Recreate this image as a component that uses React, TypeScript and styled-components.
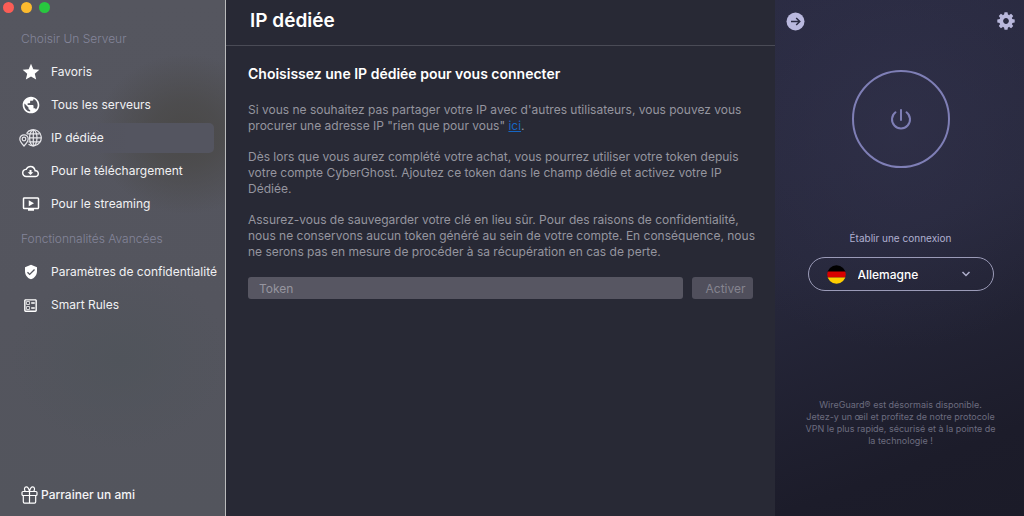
import React from "react";
import styled, { createGlobalStyle } from "styled-components";
import {
  MdStar,
  MdPublic,
  MdOutlineCloudDownload,
  MdOndemandVideo,
  MdVerifiedUser,
  MdOutlineBallot,
} from "react-icons/md";

const GlobalStyle = createGlobalStyle`
  *, *::before, *::after { box-sizing: border-box; }
  body {
    margin: 0;
    background: #282935;
    font-family: Inter, "Liberation Sans", sans-serif;
    -webkit-font-smoothing: antialiased;
  }
  button, input, select { font: inherit; color: inherit; }
  h1, h2, p, ul { margin: 0; padding: 0; }
`;

const Window = styled.div`
  display: grid;
  grid-template-columns: 226px minmax(0, 1fr) 249px;
  min-height: 100vh;
`;

const Sidebar = styled.aside`
  display: flex;
  flex-direction: column;
  border-right: 1px solid #b9babb;
  background:
    radial-gradient(ellipse 90px 80px at 186px 134px, #4a4948 0%, #4b4a4acc 40%, #54555e00 100%),
    radial-gradient(ellipse 110px 90px at 120px 360px, #50545b 0%, #54555e00 100%),
    linear-gradient(180deg, #55565f 0%, #54555e 60%, #53555d 100%);
`;

const WindowControls = styled.div`
  display: flex;
  gap: 7px;
  padding: 2px 3px;
`;

const ControlDot = styled.button<{ $color: string }>`
  width: 11px;
  height: 11px;
  padding: 0;
  border: 0;
  border-radius: 50%;
  background: ${(p) => p.$color};
`;

const NavHeading = styled.h2<{ $first?: boolean }>`
  padding-left: 21px;
  margin-top: ${(p) => (p.$first ? "16px" : "12px")};
  font-size: 12px;
  line-height: 16px;
  font-weight: 300;
  color: #84859a;
`;

const NavList = styled.ul`
  display: flex;
  flex-direction: column;
  gap: 3px;
  margin-top: 10px;
  padding-right: 11px;
  list-style: none;
`;

const NavLink = styled.a<{ $active?: boolean }>`
  display: flex;
  align-items: center;
  gap: 9px;
  height: 30px;
  padding-left: 19px;
  border-radius: 0 5px 5px 0;
  background: ${(p) => (p.$active ? "linear-gradient(90deg, #54556000, #545560 60%)" : "none")};
  color: #f1f1f3;
  font-size: 12px;
  line-height: 16px;
  white-space: nowrap;
  text-decoration: none;
`;

const IconSlot = styled.span`
  display: flex;
  flex: none;
  justify-content: center;
  width: 23px;
  color: #fff;
`;

const Referral = styled.a`
  display: flex;
  align-items: center;
  gap: 3px;
  margin-top: auto;
  padding: 0 0 12px 21px;
  color: #f4f4f6;
  font-size: 12px;
  line-height: 16px;
  font-weight: 500;
  text-decoration: none;
`;

const Main = styled.main`
  min-width: 0;
  background: #282935;
`;

const Header = styled.header`
  height: 46px;
  padding: 8px 24px 0;
  border-bottom: 1px solid #4a4b56;
`;

const Title = styled.h1`
  color: #fff;
  font-size: 19px;
  line-height: 26px;
  font-weight: 600;
`;

const Content = styled.section`
  display: flex;
  flex-direction: column;
  gap: 15px;
  padding: 18px 16px 18px 22px;
`;

const Subtitle = styled.h2`
  margin-bottom: 3px;
  color: #fff;
  font-size: 14px;
  line-height: 20px;
  font-weight: 600;
`;

const Paragraph = styled.p`
  max-width: 511px;
  color: #95959f;
  font-size: 12px;
  line-height: 16px;
`;

const TextLink = styled.a`
  color: #1666c4;
`;

const TokenForm = styled.form`
  display: flex;
  gap: 9px;
  margin: 2px 6px 0 0;
`;

const TokenInput = styled.input`
  flex: 1;
  min-width: 0;
  height: 22px;
  padding: 0 11px;
  border: 0;
  border-radius: 3px;
  background: #575662;
  font-size: 12px;
  &::placeholder { color: #96959f; opacity: 1; }
`;

const ActivateButton = styled.button`
  height: 22px;
  width: 61px;
  padding: 0 0 0 6px;
  border: 0;
  border-radius: 3px;
  background: #504f5c;
  color: #85848f;
  font-size: 12px;
`;

const ConnectPanel = styled.aside`
  display: flex;
  flex-direction: column;
  align-items: center;
  padding: 0 0 69px 2px;
  background:
    radial-gradient(circle 220px at 50% 130px, #35355080 0%, #35355000 100%),
    linear-gradient(160deg, #2a2b42 0%, #27283c 45%, #1c1c2a 85%, #1b1b28 100%);
`;

const PanelBar = styled.div`
  display: flex;
  justify-content: space-between;
  width: 100%;
  padding: 12px 9px 0;
`;

const IconButton = styled.button`
  display: flex;
  padding: 0;
  border: 0;
  background: none;
  color: #b9b8dc;
`;

const PowerButton = styled.button`
  display: flex;
  align-items: center;
  justify-content: center;
  width: 98px;
  height: 98px;
  margin-top: 39px;
  padding: 0;
  border: 2px solid #7f7fb6;
  border-radius: 50%;
  background: none;
  color: #7f7fb6;
`;

const StatusLabel = styled.label`
  margin-top: 63px;
  color: #b0b0d0;
  font-size: 10px;
  line-height: 14px;
`;

const CountryField = styled.div`
  position: relative;
  width: 186px;
  margin-top: 12px;
`;

const CountrySelect = styled.select`
  display: block;
  appearance: none;
  width: 100%;
  height: 34px;
  padding: 0 40px 0 49px;
  border: 1px solid #9b9bb8;
  border-radius: 17px;
  background: transparent;
  color: #fff;
  font-size: 12px;
  font-weight: 500;
`;

const FieldIcon = styled.span<{ $side: "left" | "right" }>`
  position: absolute;
  top: 0;
  bottom: 0;
  ${(p) => p.$side}: 19px;
  display: flex;
  align-items: center;
  pointer-events: none;
`;

const Notice = styled.p`
  width: 194px;
  margin-top: auto;
  padding-top: 24px;
  color: #6c6c7f;
  font-size: 9px;
  line-height: 12px;
  text-align: center;
`;

const DedicatedIpIcon = () => (
  <svg width="23" height="18" viewBox="0 0 23 18" fill="none" stroke="#e6e6ea" strokeWidth="1.2">
    <path d="M7.500 4.500A8 8 0 1 1 9.500 15.200" />
    <ellipse cx="14.300" cy="8.800" rx="3.700" ry="8" />
    <path d="M14.300.8v16M7.800 4.800h13M10 8.800h12.300M9.500 12.800h11.500" />
    <path d="M5 17C2.700 14.500.8 12.400.8 10a4.200 4.200 0 0 1 8.400 0C9.200 12.400 7.300 14.500 5 17Z" />
    <circle cx="5" cy="10" r="1.800" />
  </svg>
);

const GiftIcon = () => (
  <svg width="17" height="18" viewBox="0 0 17 18" fill="none" stroke="#fff" strokeWidth="1.200" strokeLinejoin="round">
    <rect x="1" y="5.500" width="15" height="4" rx="1" />
    <path d="M2.300 9.500v6.300c0 .8.500 1.300 1.200 1.300h10c.7 0 1.200-.5 1.200-1.300V9.500M8.500 5.500v11.600" />
    <path d="M8.500 5.300C7.800 2.400 6.600.9 5.300.9 3.400.9 2.800 3.600 4.300 5.300M8.500 5.300C9.200 2.400 10.400.9 11.700.9c1.900 0 2.500 2.700 1 4.400" />
  </svg>
);

const ArrowBadge = () => (
  <svg width="19" height="19" viewBox="0 0 19 19" fill="none">
    <circle cx="9.500" cy="9.500" r="9" fill="#bab9df" />
    <path d="M5 9.500h8.500M10.200 6l3.600 3.500-3.600 3.500" stroke="#2b2c44" strokeWidth="1.500" />
  </svg>
);

const GearIcon = () => (
  <svg width="18" height="18" viewBox="-9 -9 18 18">
    <circle r="4.800" fill="none" stroke="currentColor" strokeWidth="3.800" />
    {[0, 45, 90, 135].map((angle) => (
      <g key={angle} transform={`rotate(${angle})`} fill="currentColor">
        <path d="M-2-6l.5-2.700h3L2-6zM-2 6l.5 2.700h3L2 6z" />
      </g>
    ))}
  </svg>
);

const PowerIcon = () => (
  <svg width="22" height="22" viewBox="0 0 22 22" fill="none" stroke="currentColor" strokeWidth="2" strokeLinecap="round">
    <path d="M11 2v10M5.500 4.300a9 9 0 1 0 11 0" />
  </svg>
);

const GermanFlag = () => (
  <svg width="19" height="19" viewBox="0 0 19 19">
    <clipPath id="flag-disc"><circle cx="9.500" cy="9.500" r="9.300" /></clipPath>
    <g clipPath="url(#flag-disc)">
      <rect width="19" height="7" fill="#000" />
      <rect y="6.500" width="19" height="6" fill="#d80000" />
      <rect y="12.500" width="19" height="7" fill="#ffce00" />
    </g>
  </svg>
);

const Chevron = () => (
  <svg width="18" height="10" viewBox="0 0 18 10" fill="none" stroke="#aeaecb" strokeWidth="1.500">
    <path d="M5.500 3l3.500 3.500L12.500 3" />
  </svg>
);

type Entry = { label: string; icon: React.ReactNode; active?: boolean };

const servers: Entry[] = [
  { label: "Favoris", icon: <MdStar size={20} /> },
  { label: "Tous les serveurs", icon: <MdPublic size={20} /> },
  { label: "IP dédiée", icon: <DedicatedIpIcon />, active: true },
  { label: "Pour le téléchargement", icon: <MdOutlineCloudDownload size={17} /> },
  { label: "Pour le streaming", icon: <MdOndemandVideo size={18} /> },
];

const features: Entry[] = [
  { label: "Paramètres de confidentialité", icon: <MdVerifiedUser size={16} /> },
  { label: "Smart Rules", icon: <MdOutlineBallot size={17} /> },
];

const NavSection = ({ entries }: { entries: Entry[] }) => (
  <NavList>
    {entries.map((entry) => (
      <li key={entry.label}>
        <NavLink href="#" $active={entry.active} aria-current={entry.active ? "page" : undefined}>
          <IconSlot>{entry.icon}</IconSlot>
          {entry.label}
        </NavLink>
      </li>
    ))}
  </NavList>
);

export default function App() {
  return (
    <>
      <GlobalStyle />
      <Window>
        <Sidebar>
          <WindowControls>
            <ControlDot $color="#fb5d56" aria-label="Fermer" />
            <ControlDot $color="#fcbb2e" aria-label="Réduire" />
            <ControlDot $color="#28c73f" aria-label="Agrandir" />
          </WindowControls>
          <nav>
            <NavHeading $first>Choisir Un Serveur</NavHeading>
            <NavSection entries={servers} />
            <NavHeading>Fonctionnalités Avancées</NavHeading>
            <NavSection entries={features} />
          </nav>
          <Referral href="#">
            <GiftIcon />
            Parrainer un ami
          </Referral>
        </Sidebar>

        <Main>
          <Header>
            <Title>IP dédiée</Title>
          </Header>
          <Content>
            <Subtitle>Choisissez une IP dédiée pour vous connecter</Subtitle>
            <Paragraph>
              Si vous ne souhaitez pas partager votre IP avec d'autres utilisateurs, vous pouvez vous
              procurer une adresse IP "rien que pour vous" <TextLink href="#">ici</TextLink>.
            </Paragraph>
            <Paragraph>
              Dès lors que vous aurez complété votre achat, vous pourrez utiliser votre token depuis
              votre compte CyberGhost. Ajoutez ce token dans le champ dédié et activez votre IP Dédiée.
            </Paragraph>
            <Paragraph>
              Assurez-vous de sauvegarder votre clé en lieu sûr. Pour des raisons de confidentialité,
              nous ne conservons aucun token généré au sein de votre compte. En conséquence, nous ne
              serons pas en mesure de procéder à sa récupération en cas de perte.
            </Paragraph>
            <TokenForm onSubmit={(e) => e.preventDefault()}>
              <TokenInput type="text" placeholder="Token" aria-label="Token" />
              <ActivateButton type="submit">Activer</ActivateButton>
            </TokenForm>
          </Content>
        </Main>

        <ConnectPanel>
          <PanelBar>
            <IconButton aria-label="Replier"><ArrowBadge /></IconButton>
            <IconButton aria-label="Réglages"><GearIcon /></IconButton>
          </PanelBar>
          <PowerButton aria-label="Connexion"><PowerIcon /></PowerButton>
          <StatusLabel htmlFor="country">Établir une connexion</StatusLabel>
          <CountryField>
            <CountrySelect id="country">
              <option>Allemagne</option>
            </CountrySelect>
            <FieldIcon $side="left"><GermanFlag /></FieldIcon>
            <FieldIcon $side="right"><Chevron /></FieldIcon>
          </CountryField>
          <Notice>
            WireGuard® est désormais disponible.
            <br />
            Jetez-y un œil et profitez de notre protocole VPN le plus rapide, sécurisé et à la pointe
            de la technologie !
          </Notice>
        </ConnectPanel>
      </Window>
    </>
  );
}
